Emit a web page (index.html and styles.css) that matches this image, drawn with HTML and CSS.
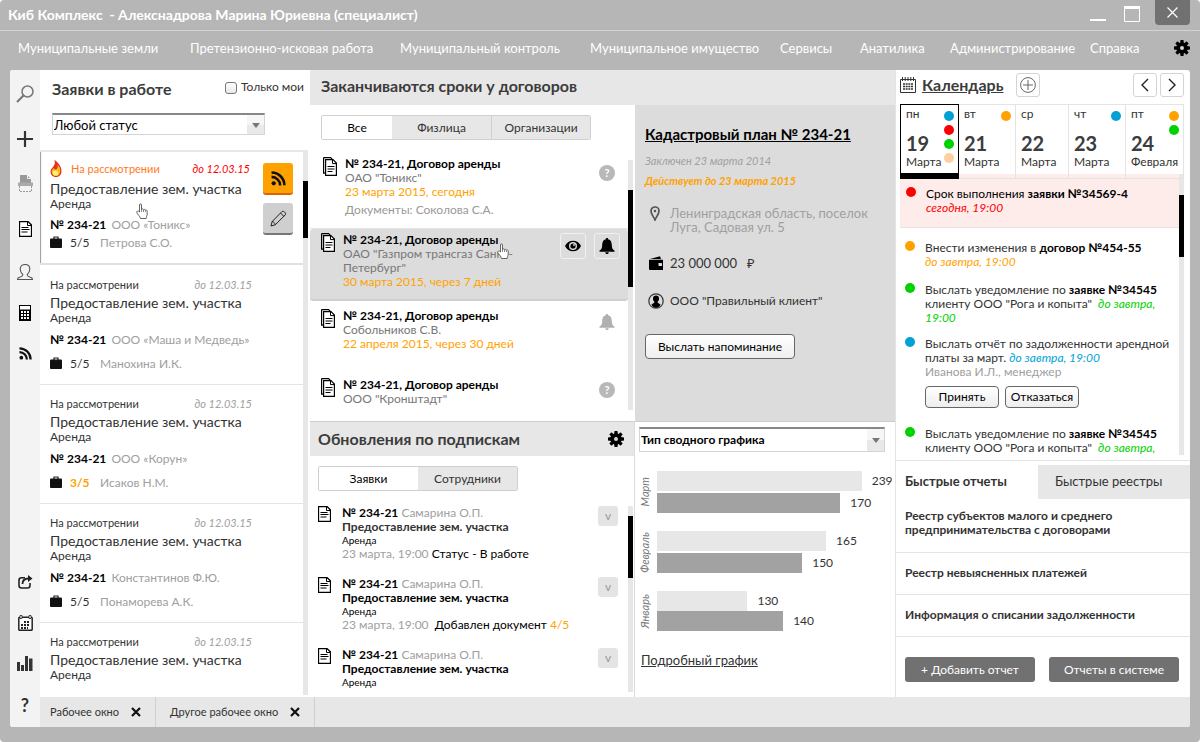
FILE: index.html
```html
<!DOCTYPE html>
<html lang="ru">
<head>
<meta charset="utf-8">
<meta name="viewport" content="width=device-width, initial-scale=1">
<title>Киб Комплекс</title>
<link rel="stylesheet" href="styles.css">
</head>
<body>
<svg class="defs" aria-hidden="true">
  <symbol id="i-doc" viewBox="0 0 13 16"><path d="M.5.5h8.500l3.500 3.500v11.500h-12z" fill="#fff" stroke="#000" stroke-width="1.300"/><path d="M8.500.500v4h4M2.500 6.500h7M2.500 8.500h8M2.500 11h6" fill="none" stroke="#000"/></symbol>
  <symbol id="i-docs" viewBox="0 0 14 19"><path d="M.6.600h7l2 2M.6.600v15.500h2" fill="none" stroke="#000" stroke-width="1.200"/><path d="M2.600 2.600h7.400l3.400 3.500v12.300H2.600z" fill="#fff" stroke="#000" stroke-width="1.200"/><path d="M9.500 2.600v4h4M4.500 9.500h7M4.500 12h7M4.500 14.500h5" fill="none" stroke="#000"/></symbol>
  <symbol id="i-case" viewBox="0 0 12 12"><path d="M4 3V1h4v2" fill="none" stroke="#222" stroke-width="1.200"/><rect y="2.500" width="12" height="9.500" rx="1" fill="#111"/></symbol>
  <symbol id="i-gear" viewBox="0 0 16 16"><g fill="currentColor"><rect x="6.300" width="3.400" height="16" rx=".8"/><rect x="6.300" width="3.400" height="16" rx=".8" transform="rotate(45 8 8)"/><rect x="6.300" width="3.400" height="16" rx=".8" transform="rotate(90 8 8)"/><rect x="6.300" width="3.400" height="16" rx=".8" transform="rotate(135 8 8)"/><circle cx="8" cy="8" r="5.800"/></g><circle cx="8" cy="8" r="2" fill="#d4d4d4"/></symbol>
  <symbol id="i-rss" viewBox="0 0 14 14"><circle cx="2.500" cy="11.500" r="2" fill="#111"/><path d="M.5 5.500a8 8 0 0 1 8 8M.5 1.400a12 12 0 0 1 12 12" fill="none" stroke="#111" stroke-width="2.400"/></symbol>
  <symbol id="i-bell" viewBox="0 0 16 18"><path d="M8 1c.8 0 1.200.5 1.200 1.200C12 3 12.700 5 12.800 8c.1 3 .7 4.500 2.700 5.500v1.200H.5v-1.200c2-1 2.600-2.500 2.700-5.500.1-3 .8-5 3.600-5.800C6.800 1.500 7.200 1 8 1zM6.300 15.200h3.400C9.700 16.600 9 17 8 17s-1.700-.4-1.700-1.800z" fill="currentColor"/></symbol>
  <symbol id="i-hand" viewBox="0 0 12 16"><path d="M3.500 9V2c0-1.600 2-1.600 2 0v4.500c.3-1 2-.8 2 .3.400-.8 1.900-.5 1.900.5.600-.5 1.800-.2 1.800.8V11c0 2-1 2.500-1 4.500H4.500C4 13 1.500 11.500.8 9.500.5 8 2 7.500 2.700 8.300z" fill="#fff" stroke="#555" stroke-width=".9"/><path d="M5.500 6.500V9M7.500 7V9M9.400 7.500V9" stroke="#555" stroke-width=".7"/></symbol>
  <symbol id="i-x" viewBox="0 0 10 10"><path d="M1 1l8 8M9 1l-8 8" stroke="#111" stroke-width="2.200"/></symbol>
</svg>

<div class="app">
  <header class="titlebar">
    <h1 class="titlebar-name">Киб Комплекс &nbsp;- Алекснадрова Марина Юриевна (специалист)</h1>
    <div class="win-buttons">
      <button class="win-btn" aria-label="Свернуть"><svg width="16" height="21"><path d="M0 20h16" stroke="#fff" stroke-width="2"/></svg></button>
      <button class="win-btn" aria-label="Развернуть"><svg width="16" height="16"><path d="M0 1.500h16" stroke="#fff" stroke-width="3"/><path d="M.5.500h15v15H.5z" fill="none" stroke="#fff"/></svg></button>
      <button class="win-close" aria-label="Закрыть"><svg width="11" height="11"><path d="M.5.500l10 10M10.500.500l-10 10" stroke="#fff" stroke-width="1.200"/></svg></button>
    </div>
  </header>
  <nav class="menu">
    <a href="#">Муниципальные земли</a><a href="#">Претензионно-исковая работа</a><a href="#">Муниципальный контроль</a><a href="#">Муниципальное имущество</a><a href="#">Сервисы</a><a href="#">Анатилика</a><a href="#">Администрирование</a><a href="#">Справка</a>
    <button class="plain" aria-label="Настройки"><svg width="16" height="16"><use href="#i-gear"/></svg></button>
  </nav>

  <div class="shell">
    <aside class="rail">
      <div class="rail-group wide">
        <button class="plain" aria-label="Поиск"><svg width="18" height="18" viewBox="0 0 18 18"><circle cx="11.500" cy="6.500" r="5.500" fill="none" stroke="#777" stroke-width="1.500"/><path d="M7.500 10.500L1 17" stroke="#777" stroke-width="2.200"/></svg></button>
        <button class="plain" aria-label="Добавить"><svg width="16" height="16" viewBox="0 0 16 16"><path d="M8 0v16M0 8h16" stroke="#333" stroke-width="2.200"/></svg></button>
        <button class="plain" aria-label="Печать"><svg width="15" height="17" viewBox="0 0 15 17"><path d="M2 0h7l4 4v5H2z" fill="#999"/><path d="M9.500 0v3.500H13" fill="none" stroke="#f3f3f3"/><path d="M0 7.500h15V11H0z" fill="#aaa"/><path d="M1.500 11v5.500h12V11" fill="none" stroke="#999" stroke-dasharray="2 1"/></svg></button>
        <button class="plain" aria-label="Документы"><svg width="13" height="16"><use href="#i-doc"/></svg></button>
      </div>
      <div class="rail-group">
        <button class="plain" aria-label="Клиенты"><svg width="16" height="16" viewBox="0 0 16 16"><path d="M5.800 10.500C4 9 3.200 7.500 3.200 5c0-3 2-4.500 4.800-4.500S12.800 2 12.800 5c0 2.500-.8 4-2.600 5.500 0 2 1 2 3.300 2.700 1.500.4 2 1 2 2.300H.5c0-1.300.5-1.900 2-2.300 2.300-.7 3.300-.7 3.300-2.700z" fill="none" stroke="#555" stroke-width="1.100"/></svg></button>
        <button class="plain" aria-label="Калькулятор"><svg width="12" height="16" viewBox="0 0 12 16"><rect x=".5" y=".5" width="11" height="15" fill="#fff" stroke="#000"/><path d="M0 4.500h12V16H0z" fill="#000"/><path d="M2 6h2v2H2zM5 6h2v2H5zM8 6h2v2H8zM2 9h2v2H2zM5 9h2v2H5zM8 9h2v2H8zM2 12h2v2H2zM5 12h2v2H5zM8 12h2v2H8z" fill="#fff"/></svg></button>
        <button class="plain" aria-label="Подписки"><svg width="13" height="13"><use href="#i-rss"/></svg></button>
      </div>
      <div class="rail-group last">
        <button class="plain" aria-label="Поделиться"><svg width="15" height="14" viewBox="0 0 15 14"><path d="M7 2.800H3.500C2 2.800 1 3.800 1 5.300V10.500C1 12 2 13 3.500 13h6c1.500 0 2.500-1 2.500-2.500V8" fill="none" stroke="#222" stroke-width="1.600"/><path d="M4.500 9c0-3.500 2-5.500 6-5.500" fill="none" stroke="#222" stroke-width="1.800"/><path d="M10 0l4.500 3.500L10 7z" fill="#222"/></svg></button>
        <button class="plain" aria-label="Календарь"><svg width="15" height="16" viewBox="0 0 15 16"><rect x=".8" y="2.300" width="13.400" height="13" rx="1" fill="#fff" stroke="#222" stroke-width="1.500"/><path d="M2 .5h2v3H2zM11 .5h2v3h-2z" fill="#fff" stroke="#222" stroke-width=".8"/><path d="M6 7h6M3 10h9M3 13h7" stroke="#222" stroke-width="2" stroke-dasharray="2 1"/></svg></button>
        <button class="plain" aria-label="Статистика"><svg width="16" height="15" viewBox="0 0 16 15"><path d="M0 6h3v9H0zM4 9h3v6H4zM8 0h3v15H8zM12 2.500h3.500V15H12z" fill="#333"/></svg></button>
        <button class="plain rail-help">?</button>
      </div>
    </aside>

    <main class="columns">
      <section class="requests">
        <div class="requests-head">
          <div class="head-line">
            <h2>Заявки в работе</h2>
            <label class="check"><input type="checkbox"> Только мои</label>
          </div>
          <div class="select select-status"><select aria-label="Статус"><option>Любой статус</option></select></div>
        </div>
        <div class="scroller">
          <div class="list">
            <article class="request active">
              <div class="request-top hot"><svg class="flame" width="12" height="17" viewBox="0 0 12 17"><path d="M4.500 0C8 2 11.500 6.500 11.500 11c0 3.500-2 6-5.500 6S.5 14.500.5 11.500C.5 9 2.500 8 4 5.500 5 4 5 2 4.500 0z" fill="#e2321c"/><path d="M7.500 4.500c2 2 2.800 4 2.800 6.500 0 3-1.800 5-4.300 5s-4.300-1.800-4.300-4.500c0-2 1-2.500 2.300-3.500.5 1 .5 1.500 1.500 1.500 2 0 2.500-2.500 2-5z" fill="#fbb917"/><ellipse cx="5.500" cy="13" rx="2.800" ry="2.600" fill="#fff27a"/></svg><span>На рассмотрении</span><em>до 12.03.15</em></div>
              <h3>Предоставление зем. участка</h3><p>Аренда</p>
              <p class="request-num"><b>№ 234-21</b> ООО «Тоникс»</p>
              <p class="request-by"><svg width="12" height="12"><use href="#i-case"/></svg><span class="cnt">5/5</span>Петрова С.О.</p>
              <div class="request-tools">
                <button class="tool tool-rss" aria-label="Подписаться"><svg width="15" height="15"><use href="#i-rss"/></svg></button>
                <button class="tool" aria-label="Редактировать"><svg width="17" height="17" viewBox="0 0 17 17"><path d="M1 16l1.200-4.500L12 1.500c1.500-1 4.500 1.500 3.300 3.300L5.300 14.800zM2.200 11.500c1.500.2 2.800 1.500 3.100 3.300M10.500 3l3.300 3.300" fill="none" stroke="#222"/></svg></button>
              </div>
              <svg class="hand" width="12" height="16"><use href="#i-hand"/></svg>
            </article>
            <article class="request">
              <div class="request-top"><span>На рассмотрении</span><em>до 12.03.15</em></div>
              <h3>Предоставление зем. участка</h3><p>Аренда</p>
              <p class="request-num"><b>№ 234-21</b> ООО «Маша и Медведь»</p>
              <p class="request-by"><svg width="12" height="12"><use href="#i-case"/></svg><span class="cnt">5/5</span>Манохина И.К.</p>
            </article>
            <article class="request">
              <div class="request-top"><span>На рассмотрении</span><em>до 12.03.15</em></div>
              <h3>Предоставление зем. участка</h3><p>Аренда</p>
              <p class="request-num"><b>№ 234-21</b> ООО «Корун»</p>
              <p class="request-by"><svg width="12" height="12"><use href="#i-case"/></svg><span class="cnt part">3/5</span>Исаков Н.М.</p>
            </article>
            <article class="request">
              <div class="request-top"><span>На рассмотрении</span><em>до 12.03.15</em></div>
              <h3>Предоставление зем. участка</h3><p>Аренда</p>
              <p class="request-num"><b>№ 234-21</b> Константинов Ф.Ю.</p>
              <p class="request-by"><svg width="12" height="12"><use href="#i-case"/></svg><span class="cnt">5/5</span>Понаморева А.К.</p>
            </article>
            <article class="request">
              <div class="request-top"><span>На рассмотрении</span><em>до 12.03.15</em></div>
              <h3>Предоставление зем. участка</h3><p>Аренда</p>
            </article>
          </div>
          <div class="track track-requests"><i></i></div>
        </div>
      </section>

      <section class="center">
        <h2 class="bar">Заканчиваются сроки у договоров</h2>
        <div class="contracts">
          <div class="tabs tabs-contracts"><button class="on">Все</button><button>Физлица</button><button>Организации</button></div>
          <div class="scroller">
            <div class="list">
              <article class="contract first">
                <svg width="14" height="19"><use href="#i-docs"/></svg>
                <div class="contract-text"><b>№ 234-21, Договор аренды</b><p>ОАО "Тоникс"</p><p class="due">23 марта 2015, сегодня</p><p class="contract-docs">Документы: Соколова С.А.</p></div>
                <span class="round">?</span>
              </article>
              <article class="contract current">
                <svg width="14" height="19"><use href="#i-docs"/></svg>
                <div class="contract-text"><b>№ 234-21, Договор аренды</b><p>ОАО "Газпром трансгаз Санкт-Петербург"</p><p class="due">30 марта 2015, через 7 дней</p></div>
                <div class="contract-tools">
                  <button aria-label="Смотреть"><svg width="16" height="12" viewBox="0 0 16 12"><path d="M0 6C3-1 13-1 16 6c-3 7-13 7-16 0z" fill="#000"/><circle cx="8" cy="6" r="4" fill="#dcdcdc"/><circle cx="8" cy="6" r="2.600" fill="#000"/><circle cx="9" cy="5" r=".9" fill="#dcdcdc"/></svg></button>
                  <button aria-label="Напомнить"><svg width="16" height="18"><use href="#i-bell"/></svg></button>
                </div>
                <svg class="hand" width="12" height="16"><use href="#i-hand"/></svg>
              </article>
              <article class="contract">
                <svg width="14" height="19"><use href="#i-docs"/></svg>
                <div class="contract-text"><b>№ 234-21, Договор аренды</b><p>Собольников С.В.</p><p class="due">22 апреля 2015, через 30 дней</p></div>
                <svg class="bell" width="16" height="18"><use href="#i-bell"/></svg>
              </article>
              <article class="contract">
                <svg width="14" height="19"><use href="#i-docs"/></svg>
                <div class="contract-text"><b>№ 234-21, Договор аренды</b><p>ООО "Кронштадт"</p></div>
                <span class="round">?</span>
              </article>
            </div>
            <div class="track track-contracts"><i></i></div>
          </div>
        </div>

        <div class="plan">
          <h3><a href="#">Кадастровый план № 234-21</a></h3>
          <p class="plan-from">Заключен 23 марта 2014</p>
          <p class="plan-to">Действует до 23 марта 2015</p>
          <div class="fact place"><svg width="20" height="15" viewBox="0 0 20 15"><path d="M10 14C9 11 6 8.500 6 5a4 4 0 0 1 8 0c0 3.500-3 6-4 9z" fill="none" stroke="#555" stroke-width="1.700"/><circle cx="10" cy="5" r="1.300" fill="#555"/></svg><span>Ленинградская область, поселок Луга, Садовая ул. 5</span></div>
          <div class="fact sum"><svg width="20" height="14" viewBox="0 0 20 14"><path d="M5 3L15 .3l1 2.700zM4 3.800h14V14H5.500C4.500 14 4 13.500 4 12.500z" fill="#000"/><rect x="13.500" y="7" width="3.500" height="3" rx=".5" fill="#dcdcdc"/></svg><span>23 000 000 &nbsp; ₽</span></div>
          <div class="fact"><svg width="20" height="16" viewBox="0 0 20 16"><circle cx="11" cy="8" r="7.200" fill="none" stroke="#333" stroke-width="1.200"/><path d="M11 2.500c2 0 3 1.200 3 3 0 1.500-.5 2.500-1.400 3.300 0 1.700 1.500 1.700 2.900 2.700-1 2.200-2.500 3.200-4.500 3.200s-3.500-1-4.500-3.200c1.400-1 2.900-1 2.900-2.700C8.500 8 8 7 8 5.500c0-1.800 1-3 3-3z" fill="#000"/></svg><span>ООО "Правильный клиент"</span></div>
          <button class="btn btn-remind">Выслать напоминание</button>
        </div>

        <div class="updates">
          <div class="bar bar-updates"><h2>Обновления по подпискам</h2><button class="plain" aria-label="Настроить подписки"><svg width="16" height="16"><use href="#i-gear"/></svg></button></div>
          <div class="tabs tabs-updates"><button class="on">Заявки</button><button>Сотрудники</button></div>
          <div class="scroller">
            <div class="list">
              <article class="update"><svg width="13" height="16"><use href="#i-doc"/></svg><div><p><b>№ 234-21</b> <span class="mute">Самарина О.П.</span></p><h3 class="soft">Предоставление зем. участка</h3><p class="small">Аренда</p><p><span class="mute">23 марта, 19:00</span> Статус - В работе</p></div><button class="more" aria-label="Подробнее">v</button></article>
              <article class="update"><svg width="13" height="16"><use href="#i-doc"/></svg><div><p><b>№ 234-21</b> <span class="mute">Самарина О.П.</span></p><h3>Предоставление зем. участка</h3><p class="small">Аренда</p><p><span class="mute">23 марта, 19:00</span> &nbsp;Добавлен документ <span class="due">4/5</span></p></div><button class="more" aria-label="Подробнее">v</button></article>
              <article class="update"><svg width="13" height="16"><use href="#i-doc"/></svg><div><p><b>№ 234-21</b> <span class="mute">Самарина О.П.</span></p><h3>Предоставление зем. участка</h3><p class="small">Аренда</p></div><button class="more" aria-label="Подробнее">v</button></article>
            </div>
            <div class="track track-updates"><i></i></div>
          </div>
        </div>

        <div class="stats">
          <div class="select select-chart"><select aria-label="Тип графика"><option>Тип сводного графика</option></select></div>
          <div class="chart">
            <div class="month"><span class="month-name">Март</span><div class="bars"><div><i style="width:86%"></i>239</div><div><i class="dark" style="width:77%"></i>170</div></div></div>
            <div class="month"><span class="month-name">Февраль</span><div class="bars"><div><i style="width:71%"></i>165</div><div><i class="dark" style="width:61%"></i>150</div></div></div>
            <div class="month"><span class="month-name">Январь</span><div class="bars tight"><div><i style="width:38%"></i>130</div><div><i class="dark" style="width:53%"></i>140</div></div></div>
          </div>
          <a class="chart-link" href="#">Подробный график</a>
        </div>
      </section>

      <section class="side">
        <div class="cal-head">
          <svg width="16" height="16" viewBox="0 0 16 16"><path d="M.5 2.500h15v13H.5z" fill="none" stroke="#333"/><path d="M2.500 0v4M5.200 0v4M8 0v4M10.800 0v4M13.500 0v4" stroke="#333"/><path d="M3 7h10M3 9.500h10M3 12h10" stroke="#333" stroke-width="1.300" stroke-dasharray="2 .67"/></svg>
          <h2><a href="#">Календарь</a></h2>
          <button class="square cal-add" aria-label="Добавить событие"><svg width="16" height="16" viewBox="0 0 16 16"><circle cx="8" cy="8" r="7.400" fill="none" stroke="#666"/><path d="M8 3v10M3 8h10" stroke="#666"/></svg></button>
          <button class="square" aria-label="Назад"><svg width="8" height="14" viewBox="0 0 8 14"><path d="M7 1L1 7l6 6" fill="none" stroke="#222" stroke-width="1.400"/></svg></button>
          <button class="square" aria-label="Вперёд"><svg width="8" height="14" viewBox="0 0 8 14"><path d="M1 1l6 6-6 6" fill="none" stroke="#222" stroke-width="1.400"/></svg></button>
        </div>
        <div class="days">
          <div class="day today"><span>пн</span><strong>19</strong><span>Марта</span><div class="dots"><i class="blue"></i><i class="red"></i><i class="green"></i><i class="peach"></i></div></div>
          <div class="day"><span>вт</span><strong>21</strong><span>Марта</span><div class="dots"><i class="orange"></i></div></div>
          <div class="day"><span>ср</span><strong>22</strong><span>Марта</span></div>
          <div class="day"><span>чт</span><strong>23</strong><span>Марта</span><div class="dots"><i class="blue"></i></div></div>
          <div class="day"><span>пт</span><strong>24</strong><span>Февраля</span><div class="dots"><i class="orange"></i><i class="green"></i></div></div>
        </div>
        <div class="scroller tasks">
          <div class="list">
            <div class="task urgent"><i class="dot red"></i><p>Срок выполнения <b>заявки №34569-4</b><br><em class="t-red">сегодня, 19:00</em></p></div>
            <div class="task"><i class="dot orange"></i><p>Внести изменения в <b>договор №454-55</b><br><em class="t-orange">до завтра, 19:00</em></p></div>
            <div class="task"><i class="dot green"></i><p>Выслать уведомление по <b>заявке №34545</b> клиенту ООО "Рога и копыта" &nbsp;<em class="t-green">до завтра, 19:00</em></p></div>
            <div class="task asked"><i class="dot blue"></i><div><p>Выслать отчёт по задолженности арендной платы за март. <em class="t-blue">до завтра, 19:00</em></p><p class="mute">Иванова И.Л., менеджер</p><div class="answers"><button class="btn">Принять</button><button class="btn">Отказаться</button></div></div></div>
            <div class="task cut"><i class="dot green"></i><p>Выслать уведомление по <b>заявке №34545</b> клиенту ООО "Рога и копыта" &nbsp;<em class="t-green">до завтра,</em></p></div>
          </div>
          <div class="track track-tasks"><i></i></div>
        </div>
        <div class="reports">
          <div class="report-tabs"><button class="on">Быстрые отчеты</button><button>Быстрые реестры</button></div>
          <a class="report" href="#">Реестр субъектов малого и среднего предпринимательства с договорами</a>
          <a class="report" href="#">Реестр невыясненных платежей</a>
          <a class="report" href="#">Информация о списании задолженности</a>
          <div class="report-buttons"><button>+ Добавить отчет</button><button>Отчеты в системе</button></div>
        </div>
      </section>
    </main>

    <footer class="windows">
      <div class="window">Рабочее окно <button class="plain" aria-label="Закрыть окно"><svg width="10" height="10"><use href="#i-x"/></svg></button></div>
      <div class="window">Другое рабочее окно <button class="plain" aria-label="Закрыть окно"><svg width="10" height="10"><use href="#i-x"/></svg></button></div>
    </footer>
  </div>
</div>
</body>
</html>
```
FILE: styles.css
```css
* { box-sizing: border-box; }
body { margin: 0; background: #fff; color: #333; font: 12px/14px Lato, "Noto Sans", sans-serif; }
h1, h2, h3, p { margin: 0; font-size: inherit; font-weight: 400; }
h2 { font-size: 16px; line-height: 20px; font-weight: 700; color: #3c3c3c; }
a { color: inherit; }
b { color: #000; }
button, select { font: inherit; color: inherit; }
button { padding: 0; cursor: pointer; }
svg { display: block; flex: none; }
.defs { position: absolute; width: 0; height: 0; }
.plain { border: 0; background: none; display: grid; place-items: center; color: #000; }
.mute { color: #a0a0a0; }
.due { color: #ffa200; }

.app { min-height: 100vh; display: flex; flex-direction: column; background: #b6b6b6; border-radius: 4px; padding-bottom: 15px; }

.titlebar { display: flex; justify-content: space-between; height: 31px; border-bottom: 1px solid #d2d2d2; padding: 0 10px 0 8px; color: #fff; }
.titlebar-name { font-size: 14px; line-height: 30px; font-weight: 700; }
.win-buttons { display: flex; align-items: flex-start; gap: 18px; }
.win-btn { border: 0; background: none; }
.win-btn + .win-btn { margin-top: 6px; }
.win-close { width: 35px; height: 25px; border: 0; border-radius: 0 0 4px 4px; background: #717171; display: grid; place-items: center; margin-left: -3px; }

.menu { display: grid; grid-template-columns: 172fr 210fr 190fr 190fr 80fr 90fr 140fr 84fr 16px; align-items: center; height: 39px; padding: 0 10px 5px 18px; font-size: 13px; color: #fff; }
.menu a { text-decoration: none; white-space: nowrap; }

.shell { flex: 1; margin: 0 10px; background: #fff; border-radius: 3px; overflow: hidden; display: grid; grid-template-columns: 30px minmax(0, 1fr); grid-template-rows: 1fr 30px; }
.rail { grid-row: 1 / 3; background: #f3f3f3; display: flex; flex-direction: column; padding: 1px 0 2px; }
.rail-group { display: grid; grid-auto-rows: 41px; }
.rail-group.wide { grid-auto-rows: 45px; }
.rail-group.last { margin-top: auto; }
.rail-help { font-size: 18px; font-weight: 700; color: #333; }

.columns { display: grid; grid-template-columns: 270fr 585fr 295fr; }
.scroller { display: flex; }
.list { flex: 1; min-width: 0; }
.track { flex: none; width: 5px; background: #e7e7e7; }
.track i { display: block; background: #000; }

.select { position: relative; height: 22px; border: 1px solid #d4d4d4; border-top: 2px solid #888; background: #fff; color: #000; }
.select select { appearance: none; width: 100%; height: 100%; border: 0; background: none; padding: 0 20px 0 1px; }
.select::before { content: ""; position: absolute; top: 0; right: 0; bottom: 0; width: 17px; background: linear-gradient(#f6f6f6 50%, #e9e9e9 50%); pointer-events: none; }
.select::after { content: ""; position: absolute; right: 4px; top: 50%; margin-top: -2px; border: 4px solid transparent; border-top: 5px solid #777; border-bottom: 0; pointer-events: none; }

.requests { display: flex; flex-direction: column; }
.requests-head { padding: 9px 6px 15px 12px; }
.head-line { display: flex; justify-content: space-between; margin-bottom: 14px; }
.check { display: flex; align-items: center; gap: 4px; height: 16px; }
.check input { appearance: none; width: 12px; height: 12px; margin: 2px 0 0; border: 1px solid #777; border-radius: 3px; background: linear-gradient(#fff, #e8e8e8); }
.select-status { width: 213px; font-size: 13px; }
.requests .scroller { flex: 1; padding-right: 2px; margin-bottom: 2px; }
.track-requests i { height: 57px; margin-top: 31px; }
.request { position: relative; padding: 12px 10px 13px; border-bottom: 1px solid #e4e4e4; }
.request:last-child { border: 0; padding-bottom: 0; }
.request h3 { font-size: 14px; line-height: 16px; margin-top: 3px; color: #333; }
.request-top { display: flex; justify-content: space-between; width: 202px; font-size: 11px; }
.request-top em { color: #a0a0a0; }
.request-num { color: #a0a0a0; margin-top: 8px; }
.request-num b { margin-right: 2px; }
.request-by { display: flex; color: #a0a0a0; margin-top: 10px; }
.cnt { width: 30px; margin-left: 8px; color: #333; }
.cnt.part { color: #ffa200; font-weight: 700; }
.request.active { padding-top: 8px; padding-bottom: 13px; border-bottom: 2px solid #e0e0e0; border-top: 2px solid #e7e7e7; box-shadow: inset 2px 0 1px -1px #999; margin-bottom: 1px; }
.request-top.hot { justify-content: flex-start; gap: 9px; width: 200px; color: #ff7a1a; height: 17px; align-items: center; }
.hot em { margin-left: auto; color: #f00; }
.active .request-num { margin-top: 7px; }
.active .request-by { margin-top: 4px; }
.active h3 { margin-top: 4px; }
.request-tools { position: absolute; top: 11px; right: 10px; display: grid; gap: 8px; }
.tool { width: 30px; height: 32px; border: 0; border-bottom: 2px solid #777; border-radius: 3px; background: #cfcfcf; display: grid; place-items: center; }
.tool-rss { background: #ffa200; border-color: #d9640a; }
.hand { position: absolute; }
.active .hand { left: 96px; top: 51px; }

.center { display: grid; grid-template-columns: 325fr 260fr; grid-template-rows: 35px 316fr 276fr; }
.bar { background: #e7e7e7; height: 35px; line-height: 32px; padding-left: 11px; }
h2.bar { grid-column: 1 / 3; }
.tabs { display: grid; height: 25px; border: 1px solid #cfcfcf; border-radius: 2px; overflow: hidden; }
.tabs button { border: 0; background: #e7e7e7; color: #333; }
.tabs button + button { border-left: 1px solid #cfcfcf; }
.tabs .on + button { border-left: 0; }
.tabs .on { background: #fff; color: #000; }
.tabs-contracts { grid-template-columns: 70px 99px 99px; width: 270px; margin: 10px 0 10px 11px; }
.contracts .scroller { padding-right: 2px; }
.track-contracts { margin: 10px 0 4px; }
.track-contracts i { height: 97px; margin-top: 30px; }
.contract { position: relative; display: flex; gap: 8px; padding: 8px 13px 19px 11px; color: #777; }
.contract.first { padding: 7px 13px 11px 13px; border-bottom: 1px solid #e4e4e4; }
.contract:last-child { padding-bottom: 8px; }
.contract:last-child .round { margin-top: 4px; }
.contract-text { flex: 1; }
.contract-docs { margin-top: 4px; color: #999; }
.contract.current { padding: 4px 8px 10px 11px; background: #dcdcdc; border-bottom: 2px solid #cfcfcf; border-radius: 3px; }
.contract-tools { display: flex; gap: 8px; color: #000; }
.contract-tools button { width: 26px; height: 26px; border: 1px solid #f0f0f0; border-radius: 3px; background: none; display: grid; place-items: center; }
.current .hand { left: 187px; top: 14px; }
.round { width: 16px; height: 16px; margin-top: 8px; border-radius: 50%; background: #b8b8b8; color: #fff; font-weight: 700; text-align: center; line-height: 16px; font-size: 11px; }
.bell { color: #b0b0b0; margin-top: 4px; }

.plan { background: #dcdcdc; padding: 19px 20px 0 10px; }
.plan h3 { font-size: 15px; line-height: 20px; font-weight: 700; color: #000; }
.plan-from { font-size: 11px; font-style: italic; color: #a0a0a0; margin-top: 10px; }
.plan-to { font-size: 11px; font-style: italic; font-weight: 700; color: #ffa200; margin-top: 6px; }
.fact { display: flex; align-items: center; gap: 5px; margin-top: 23px; }
.fact.place { align-items: flex-start; font-size: 13px; color: #a0a0a0; margin-top: 18px; }
.fact.sum { font-size: 13px; margin-top: 22px; }
.btn { border: 1px solid #666; border-radius: 4px; background: linear-gradient(#fff, #eee); color: #000; }
.btn-remind { width: 150px; height: 25px; margin-top: 25px; font-size: 12px; }

.updates { border-right: 1px solid #dcdcdc; }
.bar-updates { display: flex; justify-content: space-between; align-items: center; border-top: 1px solid #ccc; padding: 0 10px 0 8px; }
.tabs-updates { grid-template-columns: 1fr 1fr; width: 200px; margin: 10px 0 15px 8px; }
.updates .scroller { padding-right: 1px; height: 186px; }
.track-updates i { height: 62px; margin-top: 10px; }
.update { display: grid; grid-template-columns: 13px 1fr 20px; gap: 11px; align-items: start; padding: 0 10px 16px 8px; color: #000; }
.update h3 { font-weight: 700; }
.update .soft { color: #333; }
.update .small { font-size: 10px; line-height: 13px; }
.more { width: 20px; height: 20px; border: 0; border-radius: 3px; background: #e4e4e4; color: #999; }

.stats { border-top: 1px solid #ccc; padding: 5px 0 0 4px; }
.select-chart { height: 25px; margin-right: 10px; font-weight: 700; }
.chart { display: grid; gap: 18px; margin-top: 19px; }
.month { display: flex; gap: 6px; align-items: center; }
.month-name { writing-mode: vertical-rl; transform: rotate(180deg); font-size: 11px; line-height: 12px; font-style: italic; color: #777; }
.bars { flex: 1; display: grid; gap: 2px; }
.bars.tight { gap: 0; }
.bars div { display: flex; gap: 10px; align-items: center; }
.bars i { height: 20px; background: #e7e7e7; }
.bars .dark { background: #a2a2a2; }
.chart-link { display: inline-block; margin: 22px 0 0 2px; font-size: 13px; }

.side { border-left: 1px solid #e4e4e4; }
.cal-head { display: flex; align-items: center; height: 30px; padding: 0 6px 0 4px; gap: 3px; }
.cal-head h2 { margin: 0 10px 0 3px; }
.square { width: 24px; height: 24px; border: 1px solid #d4d4d4; border-radius: 3px; background: #fff; display: grid; place-items: center; }
.cal-add { margin-right: auto; }
.days { display: grid; grid-template-columns: 59fr 57fr 53fr 57fr 58fr; margin: 4px 6px 0 4px; height: 70px; }
.day { position: relative; border: 1px solid #e4e4e4; border-left: 0; padding: 2px 4px 2px 5px; }
.day span, .day strong { display: block; }
.day strong { font-size: 20px; line-height: 24px; margin-top: 10px; color: #3c3c3c; }
.today { border: 1px solid #000; border-bottom-width: 6px; height: 75px; z-index: 1; background: #fff; }
.dots { position: absolute; top: 6px; right: 4px; display: grid; gap: 4px; }
.dots i, .dot { width: 10px; height: 10px; border-radius: 50%; }
.red { background: #f00; }
.blue { background: #00a2d6; }
.green { background: #00d200; }
.orange { background: #ffa200; }
.peach { background: #ffcf9f; }
.tasks { padding: 0 6px 5px 4px; border-bottom: 1px solid #e4e4e4; }
.track-tasks i { height: 62px; margin-top: 21px; }
.task { display: flex; gap: 10px; padding: 14px 0 0 5px; }
.task .dot { flex: none; }
.task.urgent { background: #feecea; border-bottom: 1px solid #e4e4e4; padding: 13px 0 12px 6px; color: #000; margin-bottom: -1px; }
.task.asked { padding-top: 12px; }
.task.cut { padding-top: 19px; }
.t-red { color: #f00; }
.t-blue { color: #00a2d6; }
.t-green { color: #00d200; }
.t-orange { color: #ffa200; }
.answers { display: flex; gap: 6px; margin-top: 7px; }
.answers .btn { width: 74px; height: 22px; }

.report-tabs { display: grid; grid-template-columns: 142fr 152fr; height: 34px; margin-top: 4px; font-size: 13px; }
.report-tabs button { border: 0; background: #e7e7e7; text-align: left; padding: 0 0 2px 17px; }
.report-tabs .on { background: none; font-weight: 700; padding-left: 9px; }
.report { display: block; padding: 13px 40px 14px 9px; border-bottom: 1px solid #e4e4e4; font-weight: 700; text-decoration: none; }
.report-tabs + .report { padding-top: 10px; padding-bottom: 15px; }
.report-buttons { display: grid; grid-template-columns: 1fr 1fr; gap: 14px; padding: 20px 11px 13px 9px; }
.report-buttons button { height: 25px; border: 0; border-radius: 3px; background: #717171; color: #fff; }

.windows { display: flex; background: #e7e7e7; font-size: 11px; }
.window { display: flex; align-items: center; gap: 12px; padding: 0 14px 0 10px; border-right: 1px solid #cfcfcf; }
.window + .window { padding-left: 14px; }
```
